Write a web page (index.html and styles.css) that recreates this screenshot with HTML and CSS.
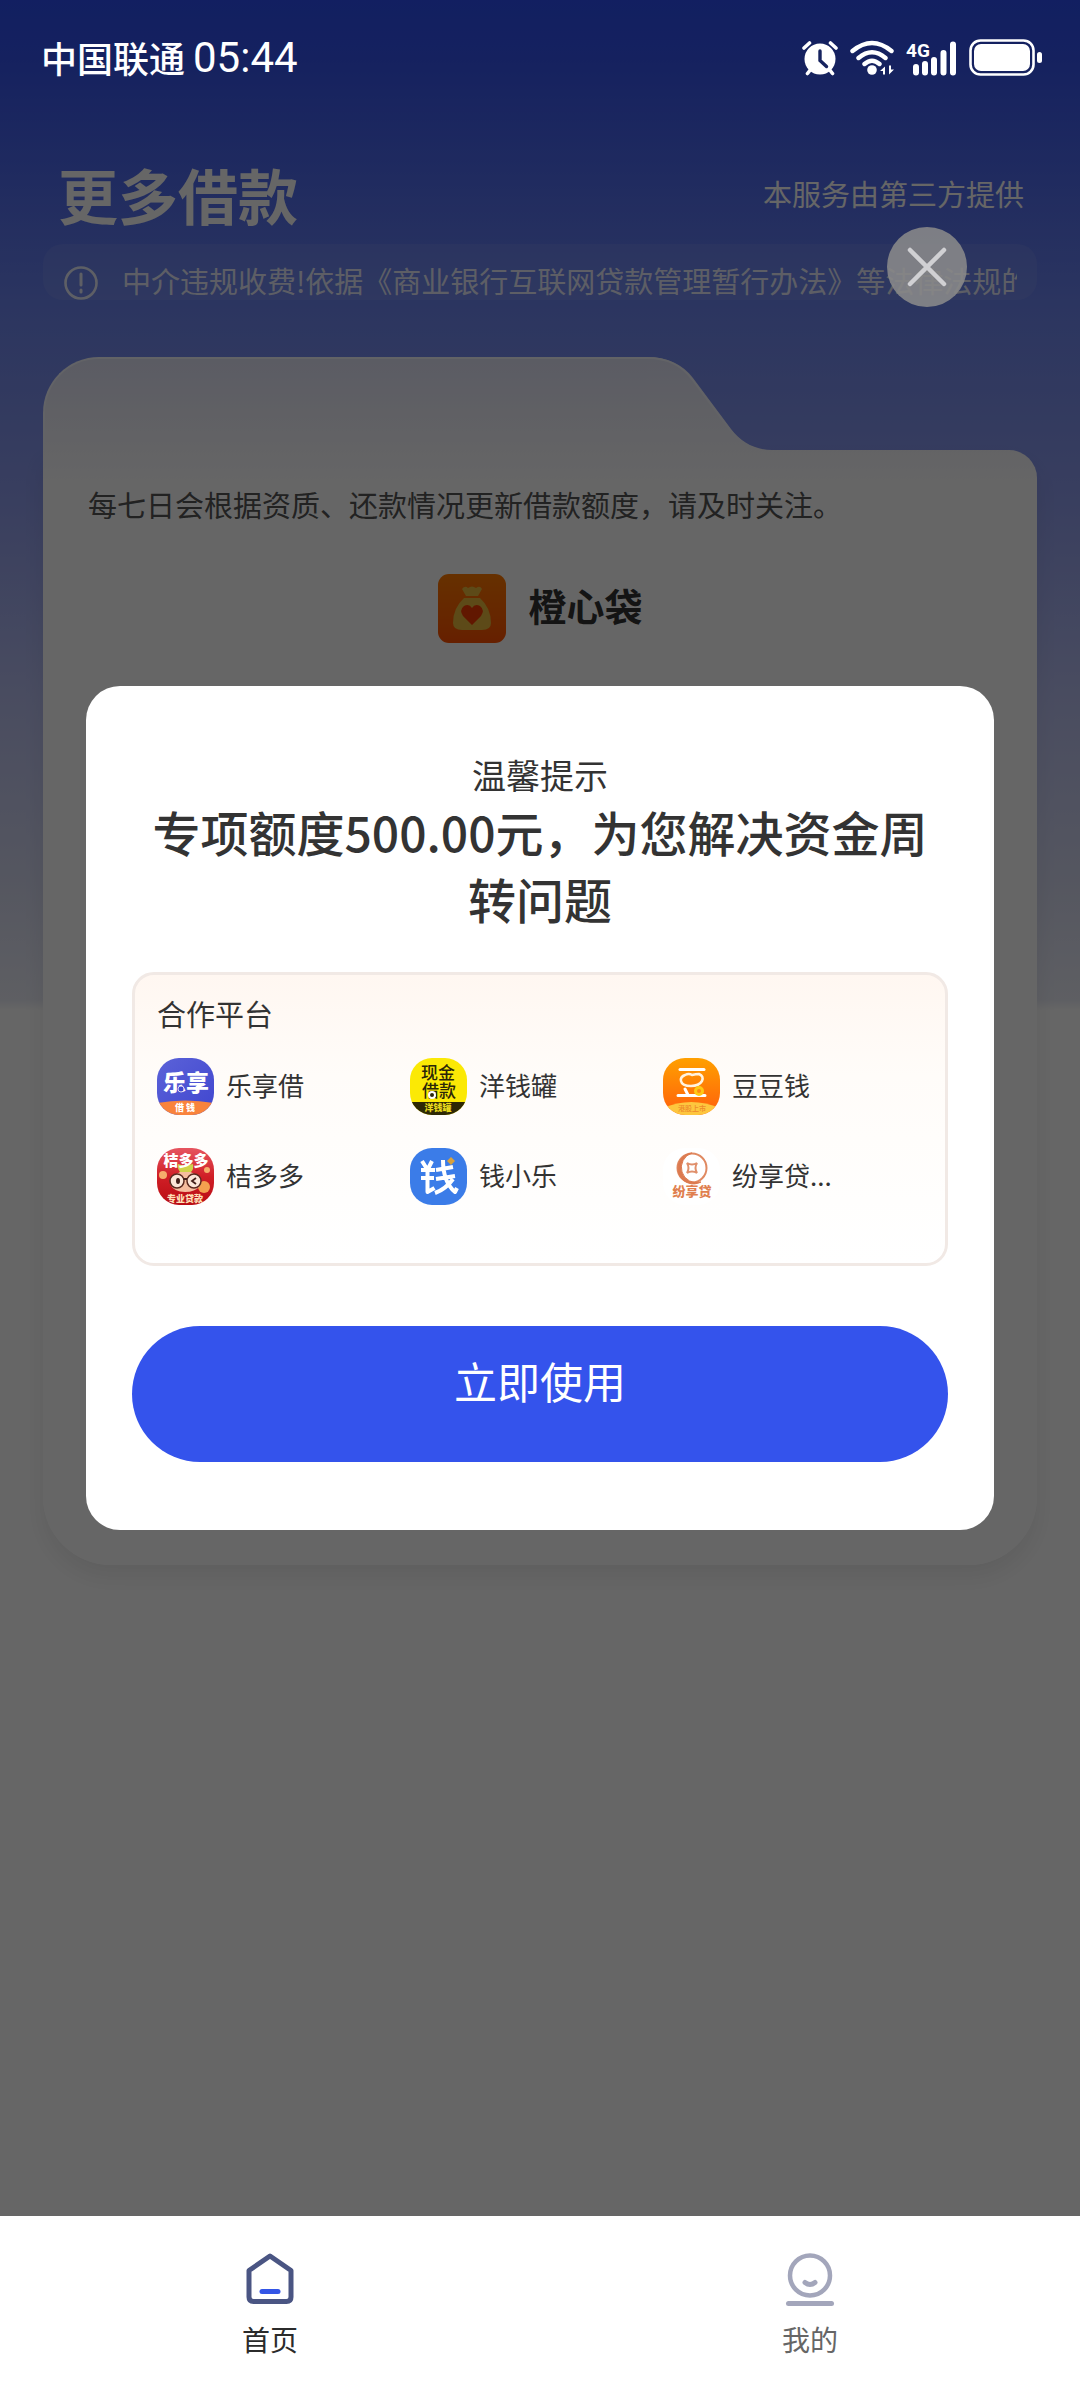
FILE: index.html
```html
<!DOCTYPE html>
<html lang="zh-CN">
<head>
<meta charset="utf-8">
<meta name="viewport" content="width=device-width, initial-scale=1">
<title>更多借款</title>
<link rel="stylesheet" href="styles.css">
</head>
<body>
<div class="stage">
  <header class="status">
    <div class="status-left"><span class="carrier">中国联通</span><span class="clock">05:44</span></div>
    <div class="status-icons">
      <svg width="36" height="40" viewBox="0 0 36 40" aria-label="闹钟">
        <g stroke="#fff" stroke-width="3.6" stroke-linecap="round" fill="none">
          <path d="M2 10L7.500 5M34 10L28.500 5M9 31L5.500 35.500M27 31L30.500 35.500"/>
        </g>
        <circle cx="18" cy="21" r="15.500" fill="#fff"/>
        <path d="M18 13v9.500l6.500 6" stroke="#16235f" stroke-width="3.400" stroke-linecap="round" fill="none"/>
      </svg>
      <svg width="44" height="40" viewBox="0 0 44 40" aria-label="无线网络">
        <g stroke="#fff" stroke-width="4.400" stroke-linecap="round" fill="none">
          <path d="M2.500 13Q22 -3 41.500 13M8.500 20Q22 8.500 35.500 20M14.500 26Q22 19.500 29.500 26"/>
        </g>
        <circle cx="22" cy="32" r="4.800" fill="#fff"/>
        <path d="M30 33l5-4.500v8h-2v-3.500zM44 31.500l-5 5v-9h2v4z" fill="#fff"/>
      </svg>
      <svg width="51" height="40" viewBox="0 0 51 40" aria-label="4G 信号">
        <text x="0" y="19" class="net">4G</text>
        <g stroke="#fff" stroke-width="6" stroke-linecap="round"><path d="M10 29v5.500M19 26v8.500M28 22v12.500M37.500 15v19.500M47 6.500v28"/></g>
      </svg>
      <svg width="73" height="40" viewBox="0 0 73 40" aria-label="电量">
        <rect x="1.500" y="2.500" width="63" height="34" rx="10" fill="none" stroke="#fff" stroke-width="2.600"/>
        <rect x="5" y="6" width="56" height="27" rx="7" fill="#fff"/>
        <rect x="68" y="14" width="5" height="11" rx="2.500" fill="#fff"/>
      </svg>
    </div>
  </header>

  <main class="page">
    <div class="heading">
      <h1>更多借款</h1>
      <p>本服务由第三方提供</p>
    </div>
    <div class="notice">
      <svg width="34" height="34" viewBox="0 0 34 34" aria-hidden="true">
        <circle cx="17" cy="17" r="15.500" fill="none" stroke="currentColor" stroke-width="2.600"/>
        <path d="M17 8v11M17 24v2" stroke="currentColor" stroke-width="3" stroke-linecap="round"/>
      </svg>
      <p>中介违规收费!依据《商业银行互联网贷款管理暂行办法》等法律法规的要求</p>
    </div>

    <section class="folder">
      <div class="folder-top">
        <div class="folder-tab"></div>
        <svg class="folder-slope" width="125" height="93" viewBox="0 0 125 93" aria-hidden="true">
          <defs><linearGradient id="tabfill" x1="0" y1="0" x2="0" y2="1"><stop offset="0" stop-color="#e3e5f8"/><stop offset="1" stop-color="#f8f8fd"/></linearGradient></defs>
          <path d="M0 0C22 0 36 8 46 21L84 72C94 85 108 93 125 93H0Z" fill="url(#tabfill)"/>
          <path d="M0 1C22 1 35 9 45 22L83 73C89 81 97 88 108 92" fill="none" stroke="#f6f7ff" stroke-width="2"/>
        </svg>
      </div>
      <div class="folder-body">
        <p class="tip">每七日会根据资质、还款情况更新借款额度，请及时关注。</p>
        <div class="brand">
          <svg width="68" height="69" viewBox="0 0 68 69" aria-hidden="true">
            <defs><linearGradient id="bag" x1="0" y1="0" x2="0" y2="1"><stop offset="0" stop-color="#ff7a00"/><stop offset="1" stop-color="#ff5000"/></linearGradient></defs>
            <rect width="68" height="69" rx="11" fill="url(#bag)"/>
            <path d="M24 15q3-4 6-1 4-3 8 0 4-3 6 1l-4 7H28zM26 24h16q11 10 11 25 0 7-9 7H24q-9 0-9-7 0-15 11-25z" fill="#e8b83c"/>
            <path d="M34 51L25 42q-4-6 1-10 5-3 8 2 3-5 8-2 5 4 1 10z" fill="#f23a00"/>
          </svg>
          <h2>橙心袋</h2>
        </div>
      </div>
    </section>
  </main>

  <div class="overlay">
    <button class="close" type="button" aria-label="关闭">
      <svg width="80" height="80" viewBox="0 0 80 80" aria-hidden="true"><path d="M23 23L57 57M57 23L23 57" stroke="#d0d0d3" stroke-width="4.500" stroke-linecap="round"/></svg>
    </button>
    <section class="dialog" role="dialog" aria-labelledby="dialog-title">
      <p class="dialog-label">温馨提示</p>
      <h2 class="dialog-title" id="dialog-title">专项额度500.00元，为您解决资金周转问题</h2>
      <div class="partners">
        <h3>合作平台</h3>
        <ul>
          <li>
            <svg class="app" viewBox="0 0 57 57" aria-hidden="true">
              <defs><linearGradient id="lx" x1="0" y1="0" x2="1" y2="1"><stop offset="0" stop-color="#5b62d8"/><stop offset="1" stop-color="#4046cf"/></linearGradient></defs>
              <rect width="57" height="57" fill="url(#lx)"/>
              <path d="M0 45Q28 40 57 45V57H0z" fill="#f9833c"/>
              <text x="29" y="33" class="mark" font-size="23" fill="#fff">乐享</text>
              <circle cx="24" cy="31" r="3" fill="#4046cf" stroke="#dcdcf0" stroke-width="1"/>
              <text x="28" y="53" class="mark" font-size="9" fill="#fff">借 钱</text>
            </svg>
            <span>乐享借</span>
          </li>
          <li>
            <svg class="app" viewBox="0 0 57 57" aria-hidden="true">
              <rect width="57" height="57" fill="#fbe905"/>
              <rect y="44" width="57" height="13" fill="#2d2805"/>
              <text x="28" y="21" class="mark thin" font-size="17" fill="#2a2608">现金</text>
              <text x="29" y="39" class="mark thin" font-size="17" fill="#2a2608">借款</text>
              <circle cx="22" cy="37" r="3" fill="#2a2608" stroke="#fff" stroke-width="2"/>
              <text x="28" y="53" class="mark" font-size="9" fill="#e9da1c">洋钱罐</text>
            </svg>
            <span>洋钱罐</span>
          </li>
          <li>
            <svg class="app" viewBox="0 0 57 57" aria-hidden="true">
              <defs><linearGradient id="dd" x1="0" y1="0" x2="0" y2="1"><stop offset="0" stop-color="#ffa000"/><stop offset="1" stop-color="#ff5f0c"/></linearGradient></defs>
              <rect width="57" height="57" fill="url(#dd)"/>
              <path d="M0 50Q28 38 57 50V57H0z" fill="#fdc63e"/>
              <path d="M17 11.500H41" stroke="#fff" stroke-width="3" stroke-linecap="round"/>
              <path d="M22 17q4-2 7 0 4-1 7-1 5 2 3 7-3 5-11 5-9 0-10-5-1-4 4-6z" fill="none" stroke="#fff3e0" stroke-width="2.500"/>
              <path d="M22 31l3 6M15 37.500H42" stroke="#fff" stroke-width="3" stroke-linecap="round"/>
              <circle cx="36" cy="33" r="3.500" fill="#ff8a10" stroke="#ffc814" stroke-width="3"/>
              <text x="29" y="53" class="mark thin" font-size="7" fill="#ee8a2a">港股上市</text>
            </svg>
            <span>豆豆钱</span>
          </li>
          <li>
            <svg class="app" viewBox="0 0 57 57" aria-hidden="true">
              <defs><linearGradient id="jd" x1="0" y1="0" x2="0" y2="1"><stop offset="0" stop-color="#e65560"/><stop offset=".5" stop-color="#d01f26"/><stop offset="1" stop-color="#b90c14"/></linearGradient></defs>
              <rect width="57" height="57" fill="url(#jd)"/>
              <circle cx="6" cy="27" r="4" fill="#f6ae6c"/><circle cx="50" cy="22" r="3" fill="#f6ae6c"/><circle cx="47" cy="39" r="6" fill="#f4a04f"/>
              <path d="M13 36Q18 23 28 23 40 23 43 38 38 44 28 44 17 44 13 36z" fill="#f6bd9e"/>
              <path d="M23 24q-3-4-2-8l7 2 8-2q1 5-2 8z" fill="#cfd34a"/>
              <text x="29" y="18" class="mark" font-size="15" fill="#fff">桔多多</text>
              <g fill="#fbe6d8" stroke="#5a2a20" stroke-width="1.500"><circle cx="20" cy="33" r="7"/><circle cx="37" cy="33" r="7"/></g>
              <path d="M26 31h4M39 30l-4 3 4 3" stroke="#42201a" stroke-width="1.800" fill="none"/>
              <ellipse cx="21" cy="33" rx="2" ry="3" fill="#42201a"/>
              <text x="28" y="54" class="mark" font-size="9" fill="#ffe0b8">专业贷款</text>
            </svg>
            <span>桔多多</span>
          </li>
          <li>
            <svg class="app" viewBox="0 0 57 57" aria-hidden="true">
              <rect width="57" height="57" fill="#3b7ce8"/>
              <g fill="none" stroke="#fff" stroke-width="4" stroke-linejoin="round">
                <path d="M12 13l5 8M22 13l-4 8M11 22h14M11 30h13M17.500 21V44l7-4"/>
                <path d="M33 12Q33 34 45 44l2-4M26 22l17-3M26 31l19-3M43 31Q36 41 25 45"/>
              </g>
              <path d="M41 9l4 4-4 4-4-4z" fill="#d9a13c"/>
            </svg>
            <span>钱小乐</span>
          </li>
          <li>
            <svg class="app" viewBox="0 0 57 57" aria-hidden="true">
              <rect width="57" height="57" fill="#fff"/>
              <circle cx="29" cy="20" r="14.500" fill="none" stroke="#e08a62" stroke-width="2"/>
              <path d="M29 5A15.500 15.500 0 1 0 38 34 15 15 0 1 1 29 5z" fill="#dc7a50" stroke="#dc7a50" stroke-width="1"/>
              <path d="M24 15q5 3 10 0-3 5 0 10-5-3-10 0 3-5 0-10z" fill="none" stroke="#e0906c" stroke-width="2"/>
              <text x="29" y="48" class="mark" font-size="13" fill="#e07f4f">纷享贷</text>
            </svg>
            <span>纷享贷...</span>
          </li>
        </ul>
      </div>
      <button class="primary" type="button">立即使用</button>
    </section>
  </div>
</div>

<nav class="tabs">
  <a class="tab active" href="#home">
    <svg width="60" height="60" viewBox="0 0 60 60" aria-hidden="true">
      <path d="M30 7L51 21.500V48q0 4.500-4.500 4.500H13.500Q9 52.500 9 48V21.500z" fill="none" stroke="#4a5583" stroke-width="5" stroke-linejoin="round"/>
      <path d="M22 42.500H38" stroke="#3355e6" stroke-width="5" stroke-linecap="round"/>
    </svg>
    首页
  </a>
  <a class="tab" href="#mine">
    <svg width="60" height="60" viewBox="0 0 60 60" aria-hidden="true">
      <circle cx="30" cy="26.500" r="20" fill="none" stroke="#a3a6bb" stroke-width="4.500"/>
      <path d="M25 33.500q5 4 10 0" fill="none" stroke="#a3a6bb" stroke-width="5" stroke-linecap="round"/>
      <path d="M8.500 54.500H51.500" stroke="#a3a6bb" stroke-width="5" stroke-linecap="round"/>
    </svg>
    我的
  </a>
</nav>
</body>
</html>
```
FILE: styles.css
```css
* { box-sizing: border-box; }

body {
  margin: 0;
  min-height: 100vh;
  display: flex;
  flex-direction: column;
  font-family: "Noto Sans CJK SC", sans-serif;
  color: #333;
  background: #fff;
}

h1, h2, h3, p, ul { margin: 0; padding: 0; }

button { font-family: inherit; border: 0; padding: 0; cursor: pointer; }

.stage {
  flex: 1;
  position: relative;
  background: linear-gradient(#2d4ff2 0, #3654ee 60px, #6e86ef 310px, #8f9ded 500px, #b8bff0 700px, #d4d8f0 880px, #ebedf7 1000px, #fff 1010px) #fff;
}

/* Status bar */
.status {
  position: relative;
  z-index: 2;
  display: flex;
  justify-content: space-between;
  align-items: center;
  padding: 38px 38px 0 41px;
  color: #fff;
}
.status-left { display: flex; align-items: center; gap: 8px; height: 40px; }
.carrier { font-size: 36px; font-weight: 500; line-height: 36px; padding-bottom: 2px; }
.clock { font-family: Roboto, sans-serif; font-size: 42px; font-weight: 400; line-height: 40px; }
.status-icons { display: flex; gap: 12px; }
.net { font: 700 19px Roboto, sans-serif; fill: #fff; }

/* Page under the dialog */
.page { padding: 76px 43px 0; }
.heading {
  display: flex;
  justify-content: space-between;
  align-items: center;
  height: 80px;
  padding: 0 13px 0 15px;
  color: #fff;
}
.heading h1 { font-size: 60px; font-weight: 700; line-height: 80px; }
.heading p { font-size: 29px; line-height: 40px; padding-bottom: 2px; }

.notice {
  display: flex;
  gap: 24px;
  height: 56px;
  margin-top: 10px;
  padding: 22px 20px 0 21px;
  border-radius: 20px;
  background: rgba(255, 255, 255, .07);
  color: rgba(255, 255, 255, .85);
}
.notice svg { flex: none; }
.notice p {
  flex: 1;
  height: 34px;
  overflow: hidden;
  white-space: nowrap;
  font-size: 29px;
  line-height: 28px;
}

.folder { margin-top: 57px; }
.folder-top { display: flex; padding-right: 265px; }
.folder-tab {
  flex: 1;
  border: 2px solid #f6f7ff;
  border-width: 2px 0 0 2px;
  border-radius: 56px 0 0 0;
  background: linear-gradient(#e3e5f8, #f8f8fd);
}
.folder-slope { flex: none; }
.folder-body {
  min-height: 1115px;
  padding: 34px 44px 0 45px;
  border-radius: 0 28px 68px 68px;
  background: linear-gradient(#f8f8fd, #fff 36px);
  box-shadow: 0 12px 22px rgba(0, 0, 0, .07);
}
.tip { font-size: 29px; line-height: 40px; color: #555; }
.brand { display: flex; justify-content: center; align-items: center; gap: 22px; margin-top: 50px; }
.brand h2 { font-size: 38px; font-weight: 700; line-height: 60px; padding-bottom: 8px; }

/* Dialog */
.overlay {
  position: absolute;
  inset: 0;
  display: flex;
  align-items: center;
  padding: 0 86px;
  background: rgba(0, 0, 0, .6);
}
.close {
  position: absolute;
  top: 227px;
  right: 113px;
  width: 80px;
  height: 80px;
  border-radius: 50%;
  background: rgba(138, 138, 138, .88);
}
.close svg { display: block; }
.dialog {
  flex: 1;
  padding: 66px 46px 68px;
  border-radius: 34px;
  background: #fff;
  text-align: center;
}
.dialog-label { font-size: 34px; line-height: 46px; }
.dialog-title { font-size: 48px; font-weight: 500; line-height: 67px; }
.partners {
  margin-top: 40px;
  padding: 19px 22px 58px;
  border: 3px solid #f1e9e5;
  border-radius: 22px;
  background: linear-gradient(#fff7f1, #fffcf9 35%, #fff);
  text-align: left;
}
.partners h3 { font-size: 29px; font-weight: 400; line-height: 38px; }
.partners ul {
  display: grid;
  grid-template-columns: repeat(3, 1fr);
  gap: 33px 0;
  margin-top: 26px;
  padding-right: 7px;
  list-style: none;
}
.partners li { display: flex; align-items: center; gap: 12px; font-size: 26px; line-height: 38px; }
.partners li span { padding-bottom: 4px; }
.app { flex: none; width: 57px; height: 57px; border-radius: 22px; }
.mark { font-weight: 900; text-anchor: middle; }
.mark.thin { font-weight: 500; }
.primary {
  display: block;
  width: 100%;
  height: 136px;
  margin-top: 60px;
  padding-bottom: 28px;
  border-radius: 68px;
  background: #3453ec;
  color: #fff;
  font-size: 43px;
}

/* Bottom tab bar */
.tabs { display: flex; height: 184px; background: #fff; }
.tab {
  flex: 1;
  display: flex;
  flex-direction: column;
  align-items: center;
  gap: 10px;
  padding-top: 33px;
  color: #666;
  font-size: 28px;
  line-height: 40px;
  text-decoration: none;
}
.tab.active { color: #2b2b2b; }
```
